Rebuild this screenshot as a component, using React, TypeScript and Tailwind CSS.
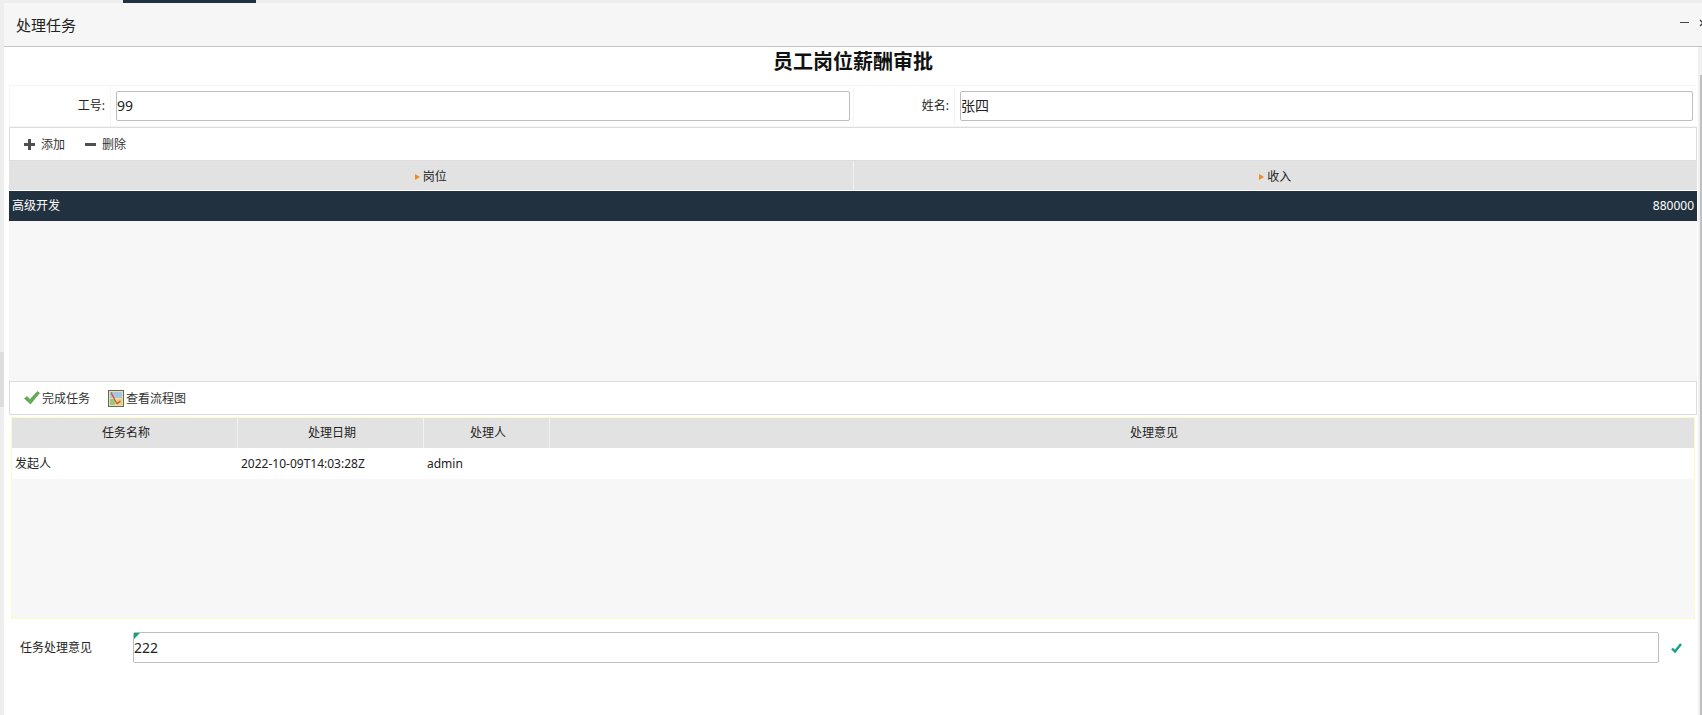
import React from "react";

const FONT = "font-['Noto_Sans','Noto_Sans_CJK_SC',sans-serif]";

const PlusIcon = () => (
  <svg width="11" height="11" viewBox="0 0 11 11" className="shrink-0">
    <path d="M4 0h3v4h4v3H7v4H4V7H0V4h4z" fill="#4f4f4f" />
  </svg>
);

const MinusIcon = () => (
  <svg width="11" height="11" viewBox="0 0 11 11" className="block shrink-0">
    <rect x="0" y="4" width="11" height="3" fill="#4f4f4f" />
  </svg>
);

const GreenCheck = () => (
  <svg width="16" height="14" viewBox="0 0 16 14" className="shrink-0">
    <path d="M0.5 7.5 3 5.5 6 8.5 13.5 0.5 15.5 2 6.5 13z" fill="#62ad52" stroke="#4f9144" strokeWidth="0.6" />
  </svg>
);

const FlowIcon = () => (
  <svg width="16" height="17" viewBox="0 0 16 17" className="block shrink-0">
    <rect x="0.5" y="0.5" width="15" height="16" fill="#e8e2a8" stroke="#5f6b5f" />
    <rect x="2" y="2" width="12" height="6" fill="#a8c4e0" />
    <rect x="2" y="9" width="5" height="6" fill="#9cc77e" />
    <rect x="9" y="9" width="5" height="6" fill="#e2d27a" />
    <path d="M3 2.5 9 14M8.5 14l4-3" stroke="#d8452e" strokeWidth="1.2" fill="none" />
  </svg>
);

const SortMark = () => <span className="mr-[3px] inline-block border-y-[3px] border-l-[5px] border-y-transparent border-l-[#f28c1e]" />;

const FieldCell = ({ label, value, last }: { label: string; value: string; last?: boolean }) => (
  <div className="flex h-full flex-1">
    <div className="flex w-[102px] items-center justify-end border border-[#f5f5f5] pr-[5px] text-[12px] text-[#222]">{label}</div>
    <div className={`flex flex-1 items-center border-y border-[#f5f5f5] pl-[5px] ${last ? "pr-[4px]" : "pr-[3px]"}`}>
      <div className="flex h-[30px] w-full items-center rounded-[2px] border border-[#bdbdbd] bg-white pb-[1px] text-[14px] text-[#222]">{value}</div>
    </div>
  </div>
);

export default function App() {
  return (
    <div className={`flex h-[715px] w-[1702px] flex-col overflow-hidden bg-[#eeeeee] ${FONT}`}>
      <div className="flex h-[3px] shrink-0">
        <div className="w-[123px]" />
        <div className="w-[133px] bg-[#223140]" />
      </div>
      <div className="flex min-h-0 flex-1">
        <div className="flex w-[4px] shrink-0 flex-col">
          <div className="h-[349px] bg-[#eeeeee]" />
          <div className="h-[55px] bg-[#dddddd]" />
          <div className="flex-1 bg-[#eeeeee]" />
        </div>
        <div className="flex min-w-0 flex-1 flex-col bg-white">
          <div className="flex h-[44px] shrink-0 items-center justify-between border-b border-[#c4c4c4] bg-[#f6f6f6] pl-[12px] text-[15px] text-[#222]">
            <span className="pt-[2px]">处理任务</span>
            <div className="flex items-center gap-[10px] pb-[4px]">
              <span className="block h-[1px] w-[9px] bg-[#444]" />
              <svg width="8" height="8" viewBox="0 0 8 8" className="-mr-[5px]">
                <path d="M1 1l6 6M7 1L1 7" stroke="#444" strokeWidth="1.3" />
              </svg>
            </div>
          </div>
          <div className="flex min-h-0 flex-1">
            <div className="flex min-w-0 flex-1 flex-col pl-[5px] pr-[1px]">
              <div className="flex h-[38px] shrink-0 items-center justify-center pb-[8px] text-[20px] font-bold text-[#111]">员工岗位薪酬审批</div>
              <div className="flex h-[42px] shrink-0">
                <FieldCell label="工号:" value="99" />
                <FieldCell label="姓名:" value="张四" last />
              </div>
              <div className="flex h-[34px] shrink-0 items-center border border-[#dcdcdc] bg-white pl-[14px] text-[12px] text-[#333]">
                <PlusIcon />
                <span className="ml-[6px] pt-[1px]">添加</span>
                <span className="ml-[20px]"><MinusIcon /></span>
                <span className="ml-[6px] pt-[1px]">删除</span>
              </div>
              <div className="flex h-[30px] shrink-0 border-b border-white bg-[#e2e2e2] text-[12px] text-[#222]">
                <div className="flex flex-1 items-center justify-center border-r border-[#f2f2f2] pt-[2px]"><SortMark />岗位</div>
                <div className="flex flex-1 items-center justify-center pt-[2px]"><SortMark />收入</div>
              </div>
              <div className="flex h-[30px] shrink-0 items-center justify-between bg-[#223140] px-[3px] text-[12px] text-white">
                <span>高级开发</span>
                <span>880000</span>
              </div>
              <div className="h-[160px] shrink-0 bg-[#f7f7f7]" />
              <div className="flex h-[34px] shrink-0 items-center border border-[#dcdcdc] bg-white pl-[14px] text-[12px] text-[#333]">
                <GreenCheck />
                <span className="ml-[2px] pt-[1px]">完成任务</span>
                <span className="ml-[18px]"><FlowIcon /></span>
                <span className="ml-[2px] pt-[1px]">查看流程图</span>
              </div>
              <div className="ml-[2px] mr-[2px] mt-[2px] flex h-[202px] shrink-0 flex-col border border-[#fbfbc8] bg-[#f7f7f7] text-[12px] text-[#222]">
                <div className="flex h-[30px] shrink-0 bg-[#e2e2e2]">
                  <div className="flex w-[226px] items-center justify-center border-r border-[#f2f2f2] pl-[3px]">任务名称</div>
                  <div className="flex w-[186px] items-center justify-center border-r border-[#f2f2f2] pl-[3px]">处理日期</div>
                  <div className="flex w-[126px] items-center justify-center border-r border-[#f2f2f2] pl-[3px]">处理人</div>
                  <div className="flex flex-1 items-center justify-center pl-[64px]">处理意见</div>
                </div>
                <div className="flex h-[31px] shrink-0 items-center bg-white">
                  <div className="w-[226px] pl-[3px]">发起人</div>
                  <div className="w-[186px] pl-[3px]">2022-10-09T14:03:28Z</div>
                  <div className="w-[126px] pl-[3px]">admin</div>
                </div>
              </div>
              <div className="mt-[13px] flex h-[31px] shrink-0 items-center text-[12px] text-[#222]">
                <span className="ml-[11px] w-[113px]">任务处理意见</span>
                <div className="relative flex h-full w-[1526px] items-center rounded-[2px] border border-[#bdbdbd] bg-white pb-[1px] text-[14px]">
                  <span className="absolute left-0 top-0 border-r-[6px] border-t-[6px] border-r-transparent border-t-[#12a37a]" />
                  222
                </div>
                <svg width="11" height="10" viewBox="0 0 11 10" className="ml-[12px]">
                  <path d="M1 5.5 4 8.5 10 1" fill="none" stroke="#12a383" strokeWidth="2.4" />
                </svg>
              </div>
            </div>
            <div className="flex w-[4px] shrink-0 flex-col bg-[#f0f0f0]">
              <div className="h-[28px]" />
              <div className="ml-[2px] flex-1 bg-[#c0c0c0]" />
            </div>
          </div>
        </div>
      </div>
    </div>
  );
}
